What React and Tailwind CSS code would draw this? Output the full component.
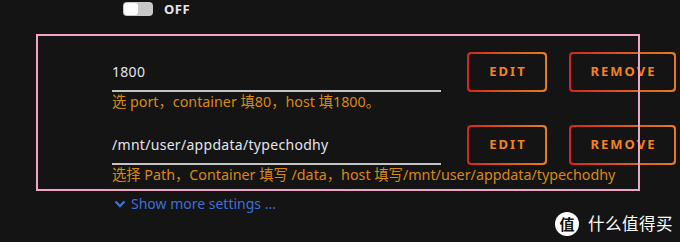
export default function App() {
  const rows = [
    { value: "1800", hint: "选 port，container 填80，host 填1800。" },
    {
      value: "/mnt/user/appdata/typechodhy",
      hint: "选择 Path，Container 填写 /data，host 填写/mnt/user/appdata/typechodhy",
    },
  ];

  return (
    <main
      className="relative w-[680px] h-[242px] overflow-hidden bg-[#141414] pl-[112px]"
      style={{ fontFamily: '"Noto Sans", "Noto Sans CJK SC", sans-serif' }}
    >
      {/* toggle */}
      <div className="flex items-center h-[14px] mt-[2px] ml-[11px] gap-[11px]">
        <div className="flex w-[30px] h-[14px] rounded-[4px] bg-[#c8c8c8] p-[1px]">
          <div className="w-[14px] h-[12px] rounded-[3px] bg-white" />
        </div>
        <span className="text-[13px] font-bold leading-none text-[#e4e6ee] tracking-[0.5px]">OFF</span>
      </div>

      <div className="flex flex-col gap-[14px] mt-[36px]">
        {rows.map((row, i) => (
          <div key={i} className="flex flex-col">
            <div className="flex items-end">
              <div className="w-[329px] h-[40px] flex items-center border-b-2 border-[#c4c4c4] text-[14px] tracking-[0.3px] text-[#e2e4ee]">
                {row.value}
              </div>
              <button className="ml-[26px] w-[80px] h-[40px] rounded-[4px] p-[2px] bg-gradient-to-r from-[#d2241e] to-[#e27c22]">
                <span className="flex h-full w-full items-center justify-center rounded-[3px] bg-[#141414] pl-[2px] text-[13px] font-bold tracking-[2px] text-[#f28420]">
                  EDIT
                </span>
              </button>
              <button className="ml-[22px] w-[107px] h-[40px] rounded-[4px] p-[2px] bg-gradient-to-r from-[#d2241e] to-[#e27c22]">
                <span className="flex h-full w-full items-center justify-center rounded-[3px] bg-[#141414] pl-[2px] text-[13px] font-bold tracking-[2px] text-[#f28420]">
                  REMOVE
                </span>
              </button>
            </div>
            <div className="mt-[1px] text-[14.3px] leading-[18px] text-[#d98a0c]">{row.hint}</div>
          </div>
        ))}
      </div>

      <div className="flex items-center gap-[5px] mt-[12px] ml-[2px] text-[14px] leading-[16px] text-[#3d6fd4]">
        <svg width="12" height="10" viewBox="0 0 12 10">
          <path d="M1.5 2.5 L6 7 L10.5 2.5" fill="none" stroke="currentColor" strokeWidth="2.4" />
        </svg>
        <span>Show more settings ...</span>
      </div>

      {/* annotation frame */}
      <div className="absolute left-[36px] top-[34px] w-[604px] h-[157px] border-2 border-[#f2a4c6] pointer-events-none" />

      {/* watermark */}
      <div className="absolute left-[555px] top-[212px] flex items-center gap-[9px]">
        <div className="w-[24px] h-[24px] rounded-full bg-white flex items-center justify-center text-[15px] font-bold text-[#111] leading-none">
          值
        </div>
        <span className="text-[16.5px] text-white leading-none tracking-[0.5px]">什么值得买</span>
      </div>
    </main>
  );
}
